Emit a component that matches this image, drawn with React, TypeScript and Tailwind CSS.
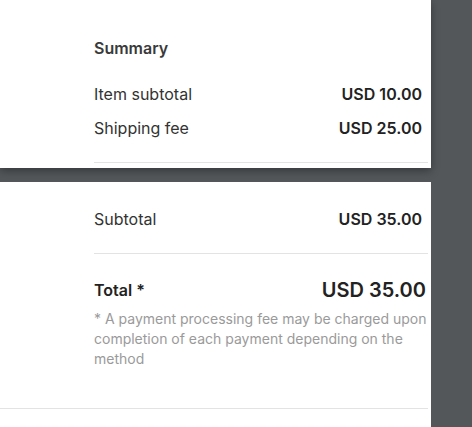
export default function App() {
  return (
    <div
      className="h-[427px] w-[472px] overflow-hidden bg-[#53575a] text-[#333]"
      style={{ fontFamily: "Inter, 'Noto Sans', sans-serif" }}
    >
      <div className="w-[431px] h-[168px] bg-white shadow-[0_3px_8px_rgba(0,0,0,0.35)] pl-[94px] pr-[3px] pt-[38px]">
        <h2 className="text-[16px] leading-5 font-semibold text-[#3a3a3a]">Summary</h2>
        <div className="mt-[26px] flex justify-between pr-[6px] text-[16px] leading-5">
          <span>Item subtotal</span>
          <span className="font-semibold text-[#222]">USD 10.00</span>
        </div>
        <div className="mt-[14px] flex justify-between pr-[6px] text-[16px] leading-5">
          <span>Shipping fee</span>
          <span className="font-semibold text-[#222]">USD 25.00</span>
        </div>
        <div className="mt-[24px] h-px bg-[#e3e3e3]" />
      </div>

      <div className="mt-[14px] w-[431px] h-[245px] bg-white">
        <div className="pl-[94px] pr-[3px] pt-[27px]">
          <div className="flex justify-between pr-[6px] text-[16px] leading-5">
            <span>Subtotal</span>
            <span className="font-semibold text-[#222]">USD 35.00</span>
          </div>
          <div className="mt-[24px] h-px bg-[#e3e3e3]" />
          <div className="mt-[22px] flex items-center justify-between pr-[2px]">
            <span className="text-[16px] leading-5 font-semibold text-[#222]">Total *</span>
            <span className="text-[20px] leading-7 font-semibold text-[#222]">USD 35.00</span>
          </div>
          <p className="mt-[5px] text-[14px] leading-5 text-[#9a9a9a]">
            * A payment processing fee may be charged upon completion of each payment depending on the method
          </p>
        </div>
        <div className="mt-[39px] mr-[3px] h-px bg-[#e3e3e3]" />
      </div>
    </div>
  );
}
